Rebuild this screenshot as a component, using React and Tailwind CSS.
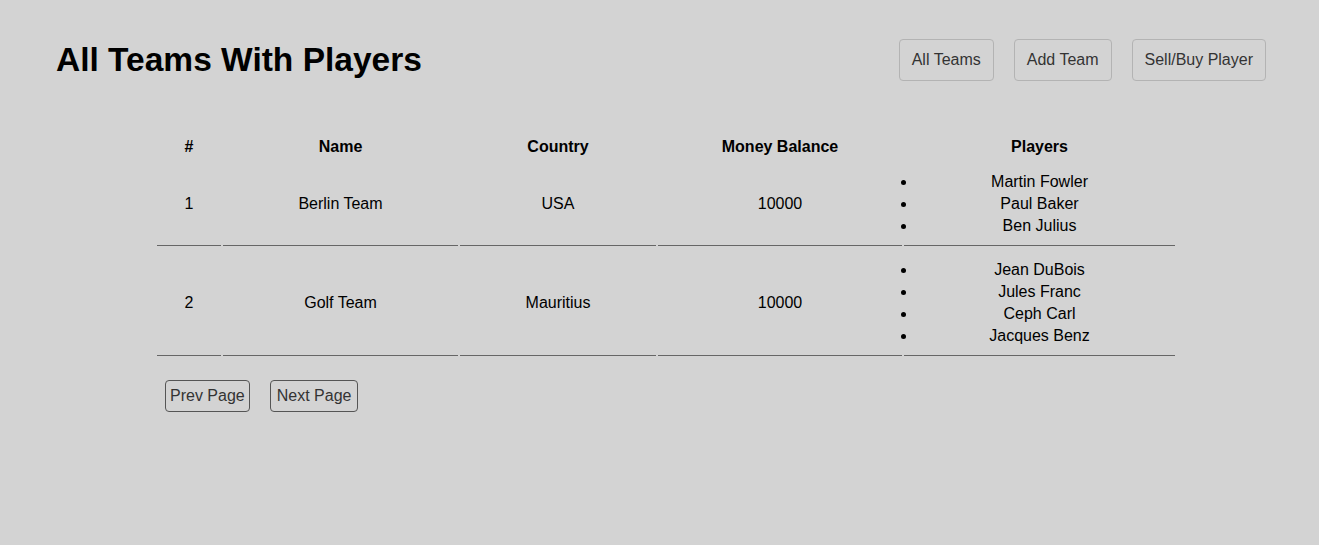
const teams = [
  { id: 1, name: 'Berlin Team', country: 'USA', balance: 10000, players: ['Martin Fowler', 'Paul Baker', 'Ben Julius'] },
  { id: 2, name: 'Golf Team', country: 'Mauritius', balance: 10000, players: ['Jean DuBois', 'Jules Franc', 'Ceph Carl', 'Jacques Benz'] },
]

function NavButton({ children }) {
  return (
    <button className="h-[42px] px-[12px] border border-[#b3b3b3] rounded-[4px] bg-[#d3d3d3] text-[#333] text-[16px] leading-[22px]">
      {children}
    </button>
  )
}

export default function App() {
  return (
    <div className="min-h-[545px] bg-[#d3d3d3] text-black font-['Liberation_Sans',Arial,sans-serif]">
      {/* Header */}
      <div className="flex items-center justify-between pl-[56px] pr-[53px] pt-[39px]">
        <h1 className="text-[33.5px] font-bold leading-[40px]">All Teams With Players</h1>
        <div className="flex gap-[20px]">
          <NavButton>All Teams</NavButton>
          <NavButton>Add Team</NavButton>
          <NavButton>Sell/Buy Player</NavButton>
        </div>
      </div>

      {/* Teams table */}
      <div className="ml-[155px] mt-[53px] w-[1022px]">
        <table className="w-[1022px] table-fixed border-separate border-spacing-[2px] text-[16px] leading-[22px]">
          <colgroup>
            <col className="w-[64px]" />
            <col className="w-[235px]" />
            <col className="w-[196px]" />
            <col className="w-[244px]" />
            <col className="w-[271px]" />
          </colgroup>
          <thead>
            <tr>
              <th className="p-0 font-bold text-center">#</th>
              <th className="p-0 font-bold text-center">Name</th>
              <th className="p-0 font-bold text-center">Country</th>
              <th className="p-0 font-bold text-center">Money Balance</th>
              <th className="p-0 font-bold text-center">Players</th>
            </tr>
          </thead>
          <tbody>
            {teams.map((team) => (
              <tr key={team.id}>
                <td className="px-0 pt-[11px] pb-[8px] text-center align-middle border-b border-[#666]">{team.id}</td>
                <td className="px-0 pt-[11px] pb-[8px] text-center align-middle border-b border-[#666]">{team.name}</td>
                <td className="px-0 pt-[11px] pb-[8px] text-center align-middle border-b border-[#666]">{team.country}</td>
                <td className="px-0 pt-[11px] pb-[8px] text-center align-middle border-b border-[#666]">{team.balance}</td>
                <td className="px-0 pt-[11px] pb-[8px] text-center align-middle border-b border-[#666]">
                  <ul className="list-disc list-outside px-[13px] m-0">
                    {team.players.map((p) => (
                      <li key={p}>{p}</li>
                    ))}
                  </ul>
                </td>
              </tr>
            ))}
          </tbody>
        </table>

        <div className="flex gap-[20px] ml-[10px] mt-[22px]">
          <button className="h-[32px] px-[4px] border border-[#555] rounded-[4px] text-[#333] text-[16px] leading-[22px]">Prev Page</button>
          <button className="h-[32px] px-[6px] border border-[#555] rounded-[4px] text-[#333] text-[16px] leading-[22px]">Next Page</button>
        </div>
      </div>
    </div>
  )
}
